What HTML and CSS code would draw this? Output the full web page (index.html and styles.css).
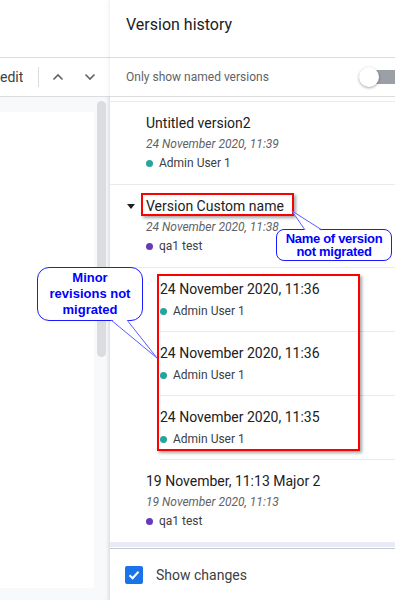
FILE: index.html
```html
<!DOCTYPE html>
<html lang="en">
<head>
    <meta charset="UTF-8">
    <meta name="viewport" content="width=device-width, initial-scale=1.0">
    <title>Version history</title>
    <link rel="stylesheet" href="styles.css">
</head>
<body>

    <div class="app">
        <!-- Left: document area (cut off) -->
        <div class="doc">
            <div class="doc-top"></div>
            <div class="doc-toolbar">
                <span class="tb-label">edit</span>
                <span class="tb-sep"></span>
                <span class="tb-btn">
                    <svg width="12" height="8" viewBox="0 0 12 8"><path d="M1.5 6.5 L6 2 L10.5 6.5" fill="none" stroke="#5f6368" stroke-width="1.6"/></svg>
                </span>
                <span class="tb-btn">
                    <svg width="12" height="8" viewBox="0 0 12 8"><path d="M1.5 1.5 L6 6 L10.5 1.5" fill="none" stroke="#5f6368" stroke-width="1.6"/></svg>
                </span>
            </div>
            <div class="doc-canvas">
                <div class="doc-page"></div>
                <div class="doc-scroll"><div class="doc-thumb"></div></div>
            </div>
        </div>

        <!-- Right: version history sidebar -->
        <aside class="history">
            <header class="history-head">Version history</header>
            <div class="filter">
                <span>Only show named versions</span>
                <span class="switch"><span class="switch-track"></span><span class="switch-knob"></span></span>
            </div>

            <ul class="versions">
                <li class="version">
                    <div class="v-title">Untitled version2</div>
                    <div class="v-date">24 November 2020, 11:39</div>
                    <div class="v-user"><span class="dot teal"></span>Admin User 1</div>
                </li>
                <li class="version">
                    <div class="v-title"><span class="caret"></span>Version Custom name</div>
                    <div class="v-date">24 November 2020, 11:38</div>
                    <div class="v-user"><span class="dot purple"></span>qa1 test</div>
                </li>
                <li class="version minor">
                    <div class="v-title">24 November 2020, 11:36</div>
                    <div class="v-user"><span class="dot teal"></span>Admin User 1</div>
                </li>
                <li class="version minor">
                    <div class="v-title">24 November 2020, 11:36</div>
                    <div class="v-user"><span class="dot teal"></span>Admin User 1</div>
                </li>
                <li class="version minor">
                    <div class="v-title">24 November 2020, 11:35</div>
                    <div class="v-user"><span class="dot teal"></span>Admin User 1</div>
                </li>
                <li class="version last">
                    <div class="v-title">19 November, 11:13 Major 2</div>
                    <div class="v-date">19 November 2020, 11:13</div>
                    <div class="v-user"><span class="dot purple"></span>qa1 test</div>
                </li>
            </ul>

            <footer class="history-foot">
                <span class="checkbox">
                    <svg width="14" height="14" viewBox="0 0 14 14"><path d="M2.5 7.2 L5.6 10.2 L11.5 3.8" fill="none" stroke="#fff" stroke-width="2"/></svg>
                </span>
                <span>Show changes</span>
            </footer>
        </aside>

        <!-- Annotations drawn over the screenshot -->
        <div class="mark mark-title"></div>
        <div class="mark mark-group"></div>

        <div class="bubble bubble-name">Name of version<br>not migrated</div>
        <div class="bubble bubble-minor">Minor<br>revisions not<br>migrated</div>

        <svg class="tails" width="395" height="600" viewBox="0 0 395 600">
            <polygon points="292,211 305,231 322,231" fill="#fff"/>
            <polyline points="305,230 292,211 322,230" fill="none" stroke="#5a5aff" stroke-width="1"/>
            <polygon points="111,319 127,319 157,358" fill="#fff"/>
            <polyline points="111,320 157,358 127,320" fill="none" stroke="#5a5aff" stroke-width="1"/>
        </svg>
    </div>

</body>
</html>
```

FILE: styles.css
```css
/* Basic reset & font */
html, body {
    margin: 0;
    padding: 0;
    background: #fff;
    font-family: Roboto, "Liberation Sans", sans-serif;
    color: #202124;
}

.app {
    position: relative;
    display: flex;
    width: 395px;
    height: 600px;
    overflow: hidden;
}

/* --- Left document area --- */
.doc {
    flex: 0 0 110px;
    display: flex;
    flex-direction: column;
    background: #f8f9fa;
}

.doc-top {
    height: 57px;
    background: #fff;
    border-bottom: 1px solid #dadce0;
}

.doc-toolbar {
    height: 38px;
    display: flex;
    align-items: center;
    background: #fff;
    border-bottom: 1px solid #dadce0;
}

.tb-label {
    font-size: 14px;
    color: #3c4043;
    width: 23px;
    overflow: hidden;
}

.tb-sep {
    width: 1px;
    height: 20px;
    margin-left: 15px;
    background: #dadce0;
}

.tb-btn {
    width: 20px;
    height: 20px;
    display: flex;
    align-items: center;
    justify-content: center;
    margin-left: 9px;
}

.tb-btn + .tb-btn {
    margin-left: 12px;
}

.doc-canvas {
    flex: 1;
    display: flex;
    background: #f8f9fa;
    box-shadow: inset -4px 0 4px -2px rgba(0, 0, 0, 0.06);
}

.doc-page {
    width: 94px;
    height: 476px;
    margin-top: 15px;
    background: #fff;
}

.doc-thumb {
    width: 9px;
    height: 256px;
    margin: 4px 0 0 3px;
    border-radius: 5px;
    background: #dadce0;
}

/* --- Version history sidebar --- */
.history {
    flex: 1;
    display: flex;
    flex-direction: column;
    overflow: hidden;
    background: #fff;
    box-shadow: -1px 0 3px rgba(0, 0, 0, 0.08);
}

.history-head {
    height: 57px;
    line-height: 50px;
    padding-left: 16px;
    font-size: 16px;
    color: #202124;
    border-bottom: 1px solid #dadce0;
}

.filter {
    height: 38px;
    display: flex;
    align-items: center;
    padding-left: 16px;
    font-size: 12px;
    color: #5f6368;
    border-bottom: 1px solid #dadce0;
}

.switch {
    position: relative;
    margin-left: auto;
    width: 36px;
    height: 20px;
}

.switch-track {
    position: absolute;
    left: 8px;
    top: 3px;
    width: 36px;
    height: 14px;
    border-radius: 7px;
    background: #9aa0a6;
}

.switch-knob {
    position: absolute;
    left: 0;
    top: 0;
    width: 20px;
    height: 20px;
    border-radius: 50%;
    background: #fff;
    box-shadow: 0 1px 3px rgba(0, 0, 0, 0.35);
}

.versions {
    list-style: none;
    margin: 4px 0 0;
    padding: 0;
    border-top: 1px solid #e8eaed;
    flex: 1;
}

.version {
    padding: 10px 0 12px 36px;
    border-bottom: 1px solid #e8eaed;
}

.version.minor {
    margin-left: 50px;
    padding: 10px 0 10px 0;
}

.version.last {
    border-bottom: 5px solid #e8ebf6;
}

.v-title {
    display: flex;
    align-items: center;
    font-size: 14px;
    line-height: 22px;
    color: #202124;
}

.caret {
    flex: 0 0 19px;
    margin-left: -19px;
    height: 22px;
    display: flex;
    align-items: center;
}

.caret::before {
    content: "";
    width: 0;
    height: 0;
    border-left: 4px solid transparent;
    border-right: 4px solid transparent;
    border-top: 5px solid #202124;
}

.v-date {
    font-size: 12px;
    line-height: 20px;
    font-style: italic;
    color: #5f6368;
}

.v-user {
    display: flex;
    align-items: center;
    font-size: 12px;
    line-height: 18px;
    color: #3c4043;
}

.minor .v-user {
    line-height: 20px;
    margin-top: 1px;
}

.dot {
    width: 7px;
    height: 7px;
    border-radius: 50%;
    margin-right: 6px;
}

.dot.teal {
    background: #26a69a;
}

.dot.purple {
    background: #673ab7;
}

.history-foot {
    height: 52px;
    display: flex;
    align-items: center;
    padding-left: 15px;
    padding-top: 1px;
    box-sizing: border-box;
    border-top: 1px solid #c6c9d1;
    font-size: 14px;
    color: #3c4043;
}

.checkbox {
    width: 18px;
    height: 18px;
    margin-right: 13px;
    border-radius: 2px;
    background: #1a73e8;
    display: flex;
    align-items: center;
    justify-content: center;
}

/* --- Annotations --- */
.mark {
    position: absolute;
    box-sizing: border-box;
    border: 2px solid #ff0000;
    box-shadow: 2px 2px 3px rgba(0, 0, 0, 0.35);
}

.mark-title {
    left: 141px;
    top: 193px;
    width: 153px;
    height: 23px;
}

.mark-group {
    left: 157px;
    top: 274px;
    width: 203px;
    height: 177px;
}

.bubble {
    position: absolute;
    box-sizing: border-box;
    display: flex;
    align-items: center;
    justify-content: center;
    text-align: center;
    background: #fff;
    border: 1.5px solid #1a1aff;
    color: #0000ff;
    font-family: "Liberation Sans", Arial, sans-serif;
    font-weight: bold;
    font-size: 13px;
}

.bubble-name {
    left: 276px;
    top: 229px;
    width: 116px;
    height: 32px;
    border-radius: 8px;
    line-height: 13px;
    letter-spacing: -0.3px;
}

.bubble-minor {
    left: 37px;
    top: 267px;
    width: 106px;
    height: 54px;
    border-radius: 12px;
    line-height: 16px;
}

.tails {
    position: absolute;
    left: 0;
    top: 0;
    pointer-events: none;
}
```
